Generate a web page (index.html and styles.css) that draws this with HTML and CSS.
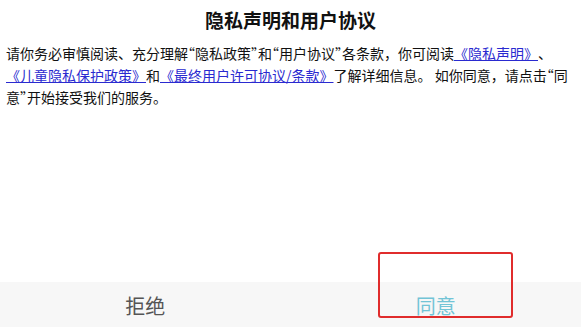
FILE: index.html
```html
<!DOCTYPE html>
<html>
	<head>
		<meta charset="UTF-8">
		<title>隐私声明和用户协议</title>
		<link rel="stylesheet" href="styles.css">
	</head>
	<body>
		<div class="page">
			<div class="title">隐私声明和用户协议</div>
			<div class="content">请你务必审慎阅读、充分理解<span class="q">“</span>隐私政策<span class="q">”</span>和<span class="q">“</span>用户协议<span class="q">”</span>各条款，你可阅读<a href="#">《隐私声明》</a>、<a href="#">《儿童隐私保护政策》</a>和<a href="#">《最终用户许可协议/条款》</a>了解详细信息。 如你同意，请点击<span class="q">“</span>同意<span class="q">”</span>开始接受我们的服务。</div>
			<div class="footer">
				<div class="btn refuse">拒绝</div>
				<div class="btn agree">同意</div>
			</div>
		</div>
		<div class="mark"></div>
	</body>
</html>
```

FILE: styles.css
```css
body {
	margin: 0;
	font-family: "Noto Sans CJK SC", "Liberation Sans", sans-serif;
	color: #111;
	background: #fff;
}
.page {
	display: flex;
	flex-direction: column;
	height: 100vh;
}
.title {
	text-align: center;
	font-size: 19px;
	font-weight: bold;
	line-height: 24px;
	padding-top: 8px;
}
.content {
	margin-top: 10px;
	padding: 0 8px 0 6px;
	font-size: 14px;
	line-height: 22px;
	text-spacing-trim: space-all;
}
.content .q {
	font-feature-settings: "halt";
}
.content a {
	color: #2a2ad0;
	text-decoration: underline;
}
.footer {
	margin-top: auto;
	height: 45px;
	background: #f7f7f7;
	display: flex;
}
.btn {
	flex: 1;
	text-align: center;
	font-size: 20px;
	line-height: 48px;
}
.refuse {
	color: #555;
}
.agree {
	color: #72c4d6;
}
.mark {
	position: absolute;
	left: 378px;
	top: 252px;
	width: 131px;
	height: 62px;
	border: 2px solid #e02c2c;
	border-radius: 3px;
}
```
